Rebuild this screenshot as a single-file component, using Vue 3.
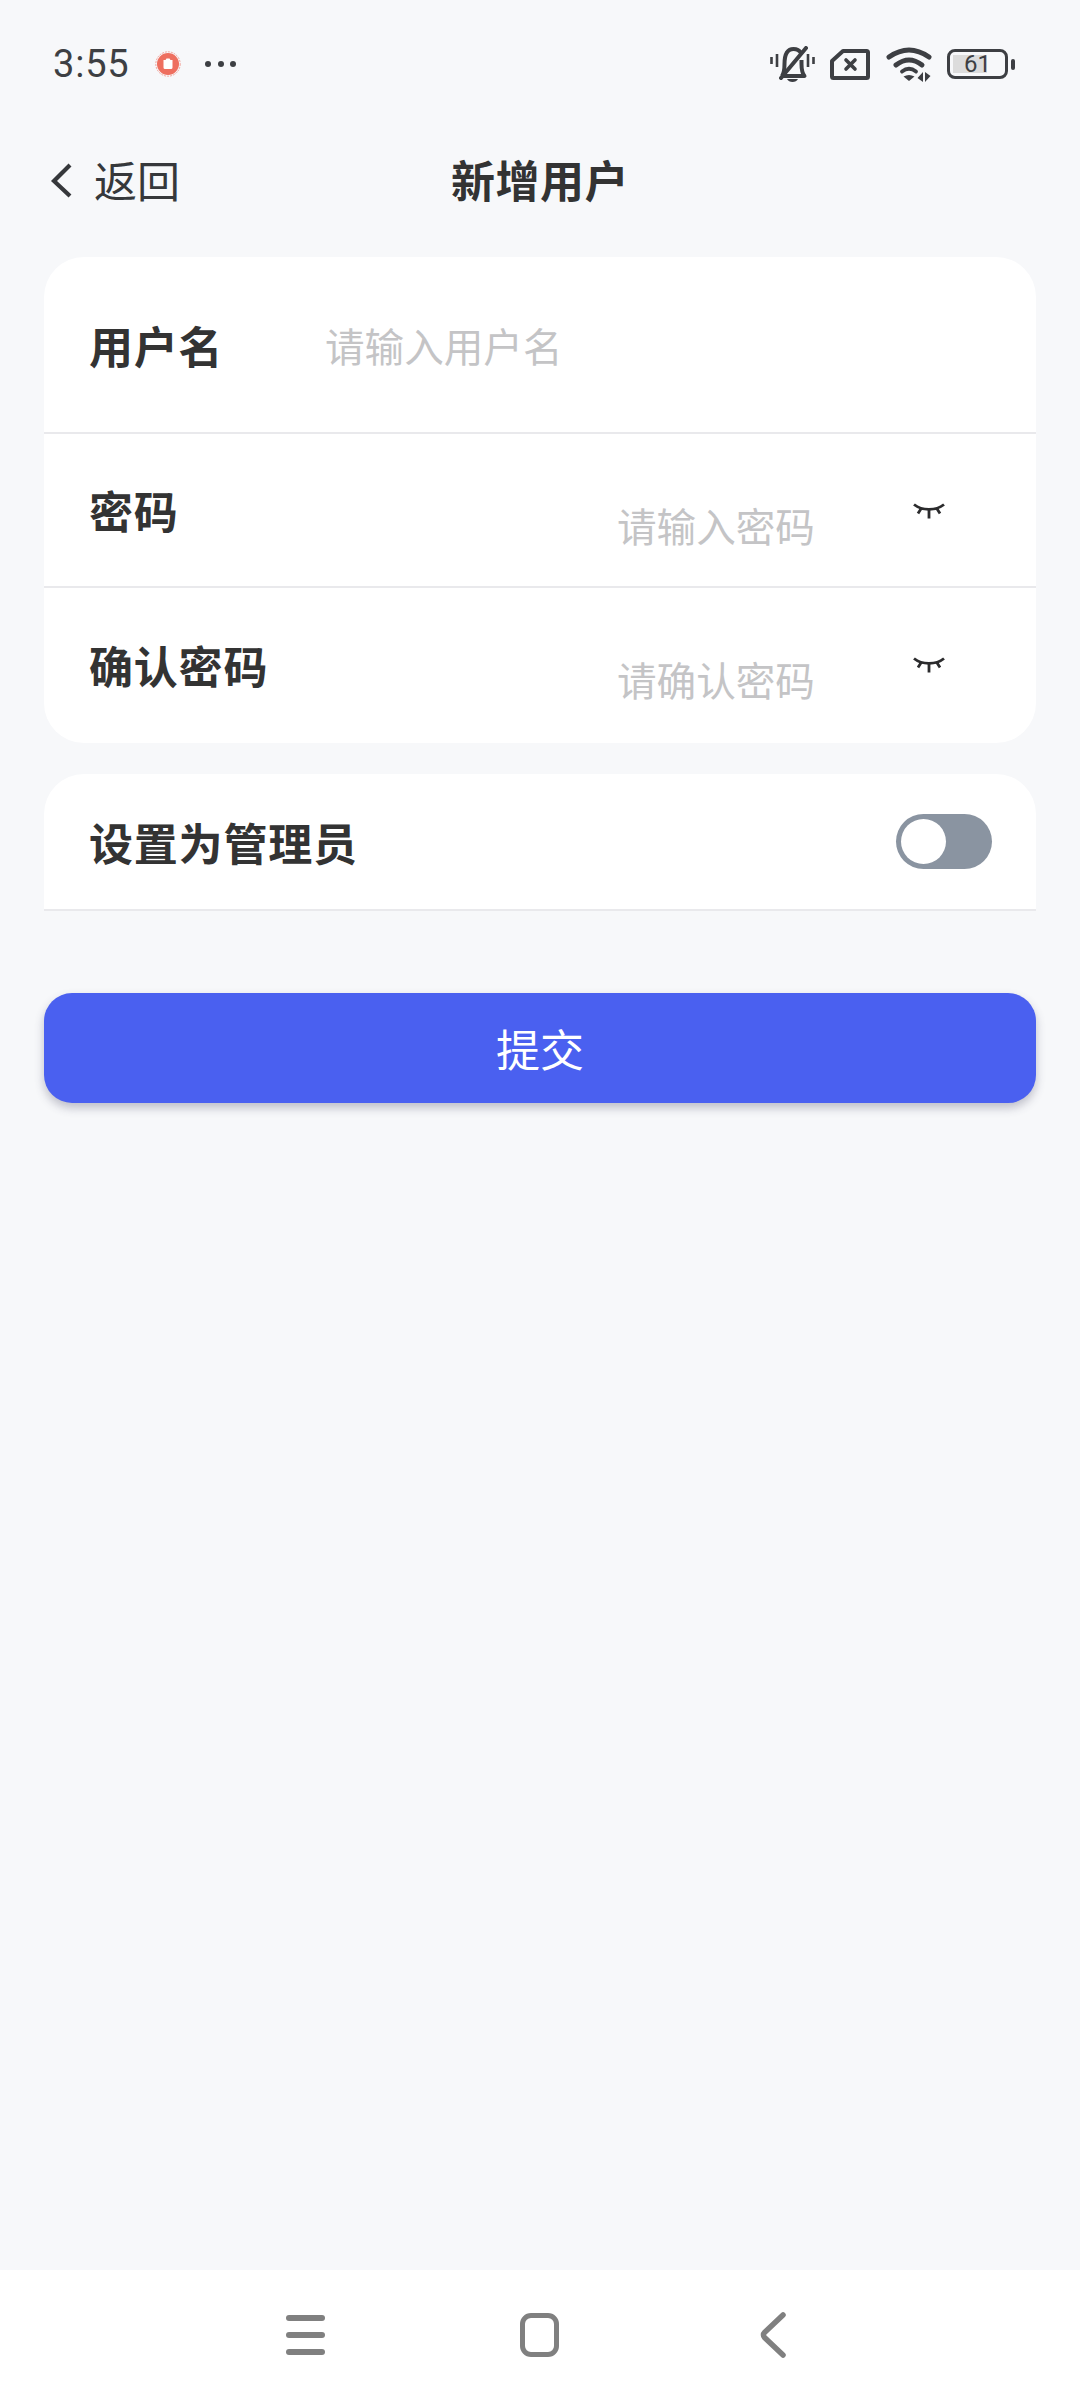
<template>
    <div class="page">
        <div class="statusBar">
            <div class="statusLeft">
                <span class="time">3:55</span>
                <svg class="recDot" width="26" height="26" viewBox="0 0 26 26">
                    <circle cx="13" cy="13" r="11" fill="#ee6f5f" />
                    <circle cx="13" cy="13" r="12.2" fill="none" stroke="#ee6f5f" stroke-width="0.6" stroke-dasharray="2 1" />
                    <path d="M8.500 9h2l1-1.500h3l1 1.500h2v7.500a1.500 1.500 0 0 1-1.500 1.500h-6a1.500 1.500 0 0 1-1.500-1.500z" fill="#fff" />
                </svg>
                <div class="dots">
                    <i></i><i></i><i></i>
                </div>
            </div>
            <div class="statusRight">
                <svg width="45" height="36" viewBox="0 0 45 36" fill="none" stroke="#3d3f43" stroke-width="4">
                    <path d="M1.500 11v7M43.500 11v7M7 8v13M38 8v13" stroke-width="2.600" />
                    <path d="M12 30c2-3 2.500-6 2.500-12C14.500 8 18 3 23.500 3c3.500 0 6 1.500 7.500 4M31.500 14v4c0 6 .5 9 3 12H13" stroke-linejoin="round" />
                    <path d="M11 32L36 2" stroke-linecap="round" />
                    <path d="M17 33h11c-1 2-3 3-5.500 3S18 35 17 33z" fill="#3d3f43" stroke="none" />
                </svg>
                <svg width="40" height="31" viewBox="0 0 40 31" fill="none" stroke="#3d3f43" stroke-width="4">
                    <path d="M13 2H36.500a1.500 1.500 0 0 1 1.500 1.500v24a1.500 1.500 0 0 1-1.500 1.500H3.500A1.500 1.500 0 0 1 2 27.500V12z" stroke-linejoin="round" />
                    <path d="M16 11l9 9M25 11l-9 9" stroke-width="3.600" stroke-linecap="round" />
                </svg>
                <svg width="46" height="36" viewBox="0 0 46 36" fill="none" stroke="#3d3f43" stroke-width="5" stroke-linecap="round">
                    <path d="M3 11Q23-3 43 11" />
                    <path d="M10 19Q23 9 36 19" />
                    <path d="M16 25.500Q23 20 30 25.500" stroke-width="3.800" />
                    <path d="M17.500 30.500q5.500-3 11 0L23 35z" fill="#3d3f43" stroke="none" />
                    <path d="M37 26v10l-5.500-4zM39 36V26l5.500 4z" fill="#3d3f43" stroke="none" />
                </svg>
                <div class="battery">
                    <div class="batteryBody">
                        <div class="batteryFill"></div>
                        <span>61</span>
                    </div>
                    <div class="batteryTip"></div>
                </div>
            </div>
        </div>

        <div class="navBar">
            <div class="backBtn">
                <svg class="backArrow" width="22" height="36" viewBox="0 0 22 36" fill="none" stroke="#36383b" stroke-width="4.200">
                    <path d="M20 2L4 18l16 15" />
                </svg>
                <span>返回</span>
            </div>
            <div class="title">新增用户</div>
        </div>

        <div class="card first">
            <div class="row nameRow">
                <div class="label">用户名</div>
                <div class="placeholder">请输入用户名</div>
            </div>
            <div v-for="item in passwords" :key="item.label" class="row passRow">
                <div class="label">{{ item.label }}</div>
                <div class="placeholder passHolder">{{ item.hint }}</div>
                <svg class="eye" width="32" height="16" viewBox="0 0 32 16" fill="none" stroke="#2b2b2d" stroke-width="2.800">
                    <path d="M1 1.500c8 6.500 22 6.500 30 0" />
                    <path d="M16 6v9.500M8.500 5L5 10.500M23.500 5L27 10.500" />
                </svg>
            </div>
        </div>

        <div class="card adminCard">
            <div class="label">设置为管理员</div>
            <div class="toggle"><div class="knob"></div></div>
        </div>

        <div class="submit">提交</div>

        <div class="spacer"></div>

        <div class="bottomBar">
            <div class="menuIcon"><i></i><i></i><i></i></div>
            <div class="homeIcon"></div>
            <svg class="navBack" width="26" height="46" viewBox="0 0 26 46" fill="none" stroke="#808080" stroke-width="5.500" stroke-linecap="round" stroke-linejoin="round">
                <path d="M23 3L4.500 20.500a3.500 3.500 0 0 0 0 5L23 43" />
            </svg>
        </div>
    </div>
</template>

<script setup>
const passwords = [
    { label: '密码', hint: '请输入密码' },
    { label: '确认密码', hint: '请确认密码' },
]
</script>

<style>
html, body {
    margin: 0;
    background: #f7f8fa;
}
</style>

<style scoped>
.page {
    width: 1080px;
    height: 2400px;
    display: flex;
    flex-direction: column;
    background: #f7f8fa;
    font-family: "Noto Sans CJK SC", "Noto Sans", sans-serif;
    color: #333;
}

.statusBar {
    height: 128px;
    box-sizing: border-box;
    padding: 0 65px 0 53px;
    display: flex;
    align-items: center;
    justify-content: space-between;
}

.statusLeft {
    display: flex;
    align-items: center;
}

.time {
    font-family: Roboto, sans-serif;
    font-size: 38px;
    color: #3d3f43;
    letter-spacing: 0.8px;
}

.recDot {
    margin-left: 26px;
}

.dots {
    display: flex;
    gap: 6.500px;
    margin-left: 24px;
}

.dots i {
    width: 6px;
    height: 6px;
    border-radius: 50%;
    background: #3d3f43;
}

.statusRight {
    display: flex;
    align-items: center;
    gap: 15.500px;
}

.battery {
    display: flex;
    align-items: center;
    gap: 3px;
}

.batteryBody {
    position: relative;
    width: 55px;
    height: 24px;
    box-sizing: content-box;
    border: 3px solid #3d3f43;
    border-radius: 8px;
    display: flex;
    align-items: center;
    justify-content: center;
    font-family: Roboto, sans-serif;
    font-size: 24px;
    color: #3d3f43;
}

.batteryBody span {
    position: relative;
}

.batteryFill {
    position: absolute;
    left: 3px;
    top: 3px;
    bottom: 3px;
    width: 34px;
    background: #dcdcdc;
}

.batteryTip {
    width: 4px;
    height: 11px;
    border-radius: 2px;
    background: #3d3f43;
}

.navBar {
    position: relative;
    height: 102px;
    margin-bottom: 27px;
    display: flex;
    align-items: center;
    justify-content: center;
}

.backBtn {
    position: absolute;
    left: 50px;
    top: 0;
    bottom: 0;
    display: flex;
    align-items: center;
    gap: 22px;
    font-size: 43px;
    color: #36383b;
}

.backArrow {
    margin-top: 4px;
}

.title {
    font-size: 44px;
    font-weight: 700;
    letter-spacing: 0.5px;
}

.card {
    margin: 0 44px;
    background: #fff;
}

.first {
    border-radius: 40px;
    overflow: hidden;
}

.row {
    position: relative;
    display: flex;
    align-items: center;
    padding: 0 45px;
    box-sizing: border-box;
}

.nameRow {
    height: 177px;
    border-bottom: 2px solid #e9e9ec;
}

.passRow {
    height: 152px;
}

.passRow + .passRow {
    border-top: 2px solid #e9e9ec;
    height: 157px;
    padding-bottom: 2px;
}

.label {
    font-size: 44px;
    font-weight: 700;
    letter-spacing: 0.8px;
}

.nameRow .label {
    width: 236px;
}

.placeholder {
    font-size: 39.600px;
    color: #c4c4c6;
}

.passHolder {
    position: absolute;
    left: 573px;
    top: 62px;
}

.eye {
    position: absolute;
    left: 869px;
    top: 69px;
}

.adminCard {
    margin-top: 31px;
    height: 137px;
    box-sizing: border-box;
    padding: 0 44px 0 45px;
    border-radius: 40px 40px 0 0;
    border-bottom: 2px solid #e9e9ec;
    display: flex;
    align-items: center;
    justify-content: space-between;
}

.toggle {
    width: 96px;
    height: 55px;
    box-sizing: border-box;
    padding: 5px;
    border-radius: 28px;
    background: #8a94a1;
}

.knob {
    width: 45px;
    height: 45px;
    border-radius: 50%;
    background: #fff;
}

.submit {
    margin: 82px 44px 0;
    height: 110px;
    border-radius: 28px;
    background: #4a60f0;
    color: #fff;
    font-size: 44px;
    display: flex;
    align-items: center;
    justify-content: center;
    box-shadow: 0 5px 10px rgba(60, 60, 90, 0.3);
}

.spacer {
    flex: 1;
}

.bottomBar {
    height: 130px;
    background: #fff;
    display: flex;
    align-items: center;
    justify-content: center;
    padding-right: 9px;
}

.menuIcon {
    display: flex;
    flex-direction: column;
    gap: 11.500px;
}

.menuIcon i {
    width: 39px;
    height: 5.500px;
    border-radius: 3px;
    background: #808080;
}

.homeIcon {
    width: 29px;
    height: 34px;
    margin-left: 195px;
    border: 5.500px solid #808080;
    border-radius: 11px;
}

.navBack {
    margin-left: 201px;
}
</style>
